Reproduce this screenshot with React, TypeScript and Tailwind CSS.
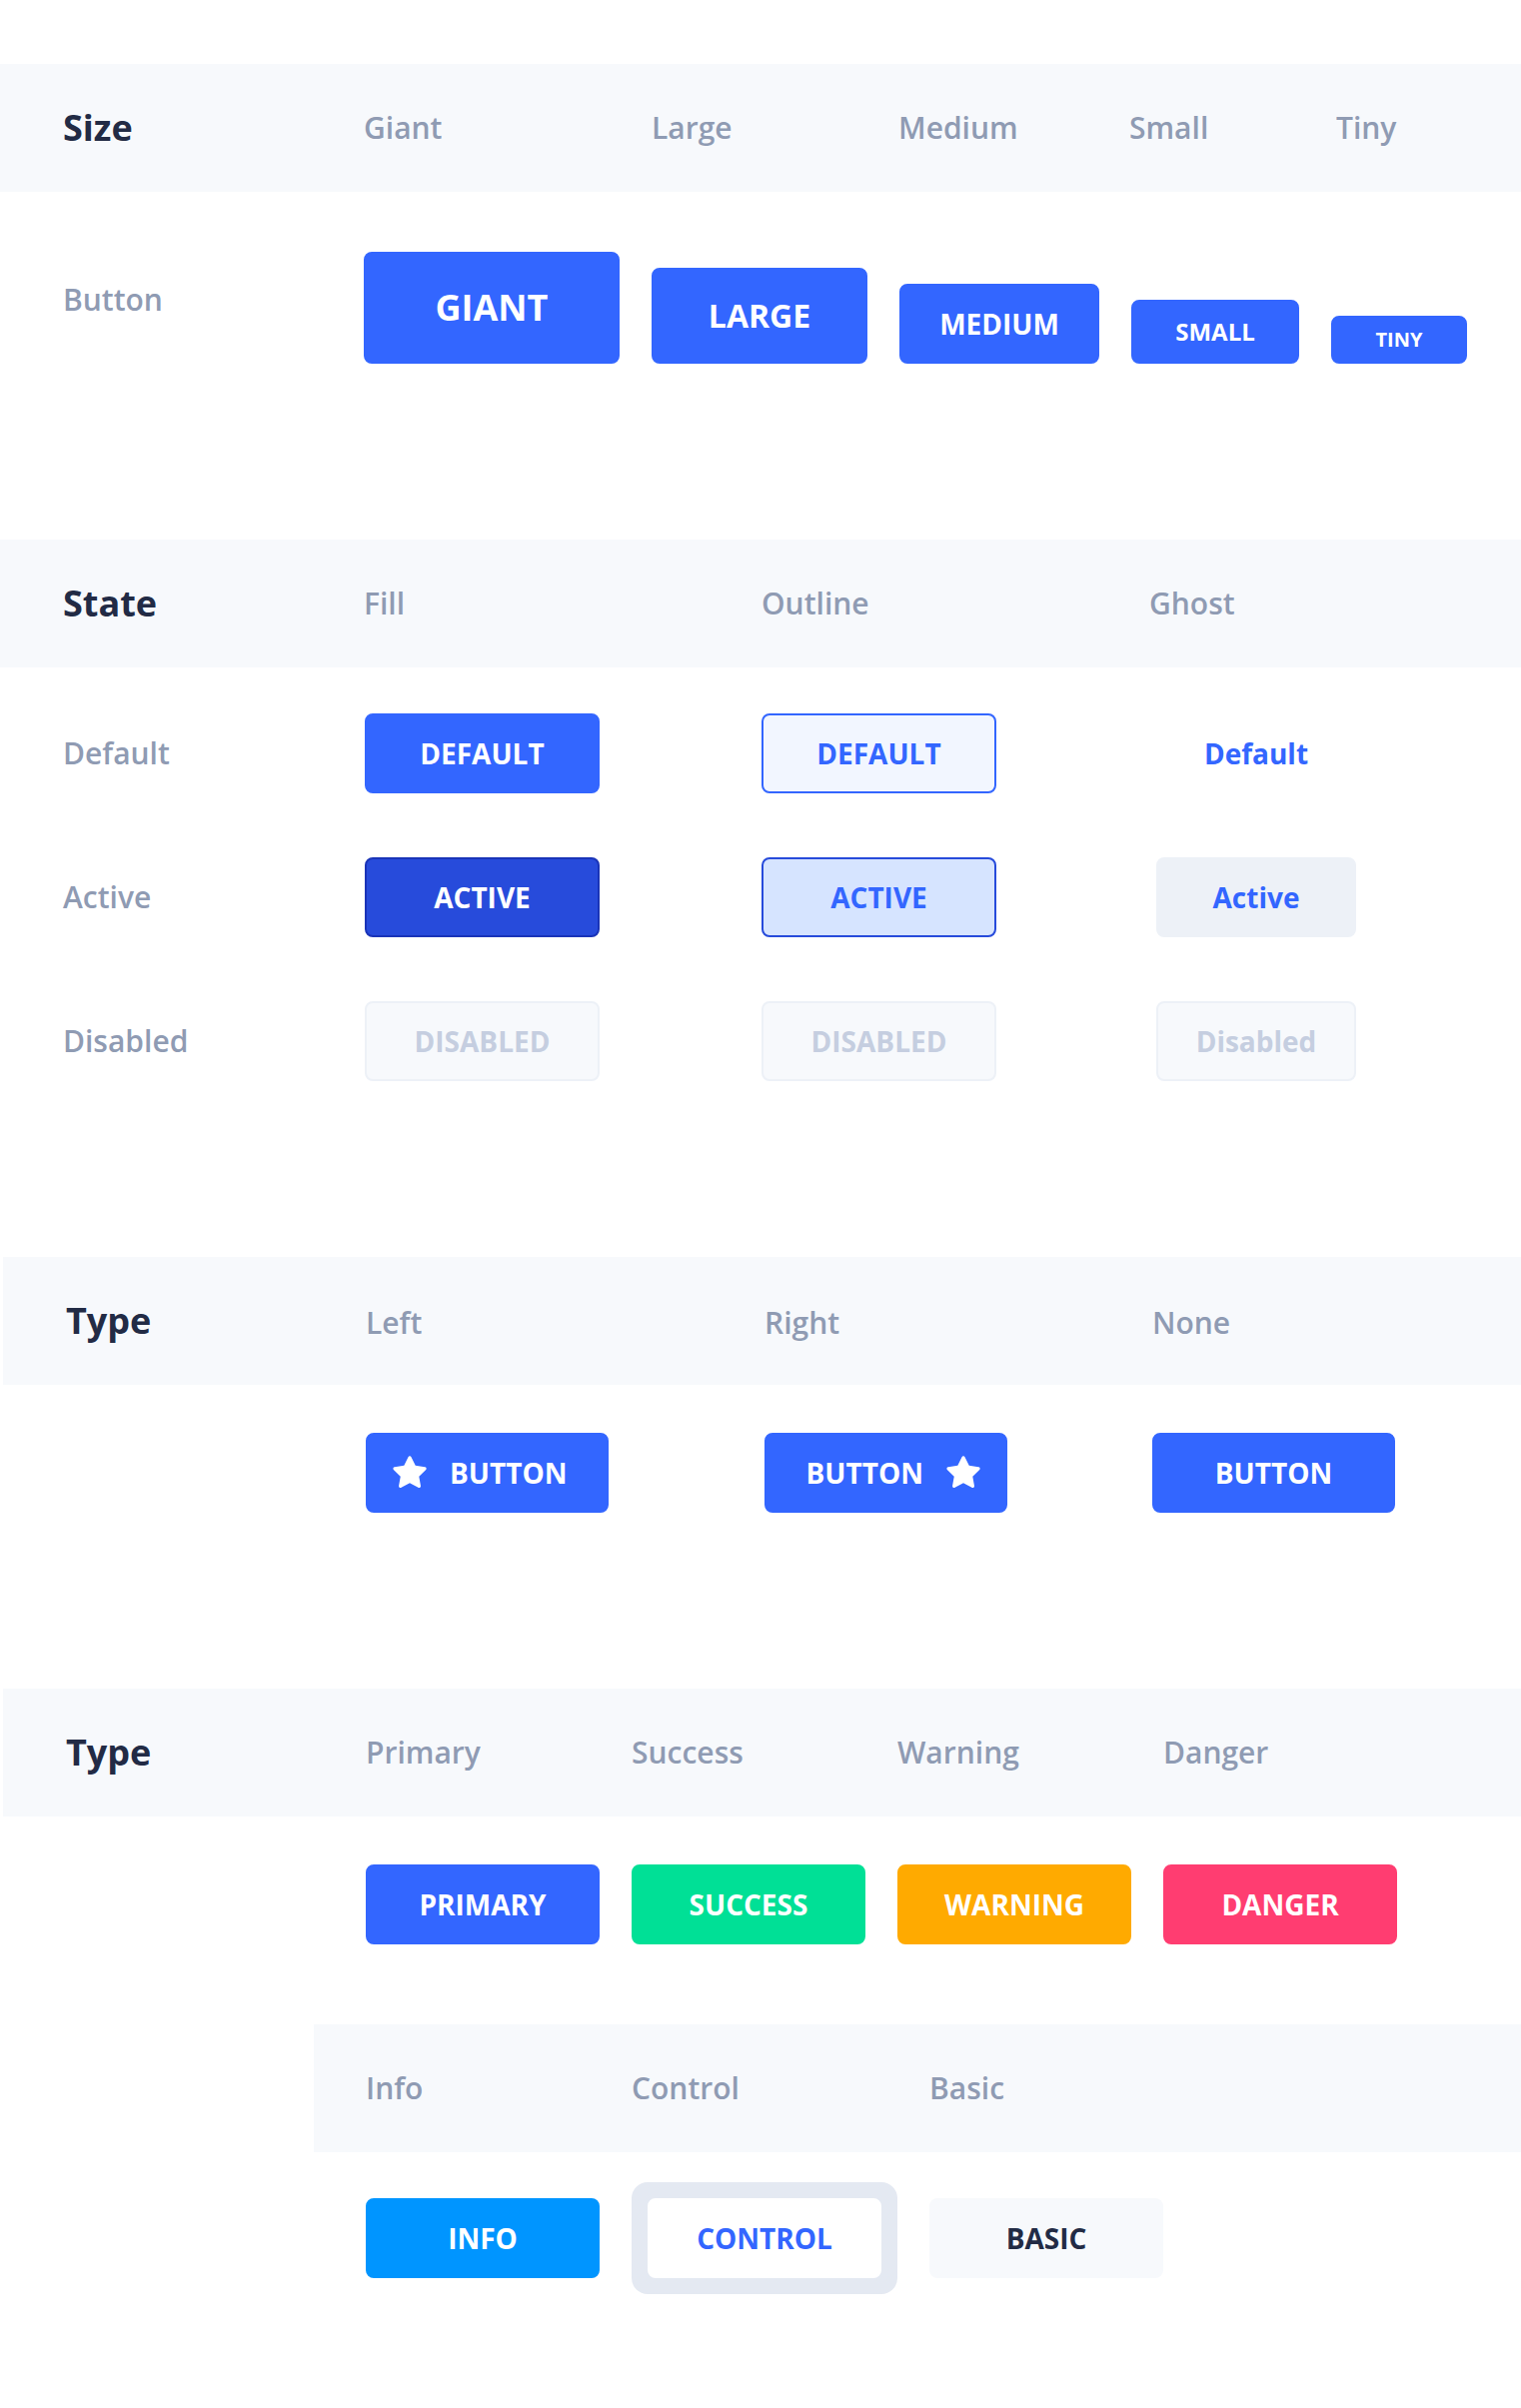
import type { ReactNode } from 'react';

function Star() {
  return (
    <svg viewBox="0 0 24 24" className="size-[40px] shrink-0" fill="currentColor">
      <path d="M17.56 21a1 1 0 0 1-.46-.11L12 18.22l-5.1 2.67a1 1 0 0 1-1.45-1.06l1-5.63-4.12-4a1 1 0 0 1-.25-1 1 1 0 0 1 .81-.68l5.7-.83 2.51-5.13a1 1 0 0 1 1.8 0l2.54 5.12 5.7.83a1 1 0 0 1 .81.68 1 1 0 0 1-.25 1l-4.12 4 1 5.63a1 1 0 0 1-.4 1 1 1 0 0 1-.62.18z" />
    </svg>
  );
}

function Btn({ className, children }: { className: string; children: ReactNode }) {
  return (
    <button
      type="button"
      className={`flex shrink-0 items-center rounded-[8px] border-2 font-bold leading-normal ${className}`}
    >
      {children}
    </button>
  );
}

const band = 'flex h-[128px] items-center bg-[#f7f9fc]';
const title = 'text-[36px] font-bold leading-[48px] text-[#222b45]';
const label = 'text-[30px] font-semibold leading-[40px] text-[#8f9bb3]';

const primary = 'justify-center border-[#3366ff] bg-[#3366ff] text-white';
const disabled = 'justify-center border-[#edf1f7] bg-[#f7f9fc] text-[#c5cee0]';

export default function App() {
  return (
    <div className="min-h-screen w-full bg-white pt-[64px] pb-[114px] font-['Open_Sans',sans-serif]">
      {/* Size */}
      <section>
        <div className={`${band} pl-[63px]`}>
          <div className={`w-[301px] ${title}`}>Size</div>
          <div className={`w-[288px] ${label}`}>Giant</div>
          <div className={`w-[247px] ${label}`}>Large</div>
          <div className={`w-[231px] ${label}`}>Medium</div>
          <div className={`w-[207px] ${label}`}>Small</div>
          <div className={label}>Tiny</div>
        </div>
        <div className="mt-[60px] flex items-center pl-[63px]">
          <div className={`w-[301px] pb-[16px] ${label}`}>Button</div>
          <div className="flex items-end gap-[32px]">
            <Btn className={`h-[112px] w-[256px] text-[36px] ${primary}`}>GIANT</Btn>
            <Btn className={`h-[96px] w-[216px] text-[32px] ${primary}`}>LARGE</Btn>
            <Btn className={`h-[80px] w-[200px] text-[28px] ${primary}`}>MEDIUM</Btn>
            <Btn className={`h-[64px] w-[168px] text-[24px] ${primary}`}>SMALL</Btn>
            <Btn className={`h-[48px] w-[136px] text-[20px] ${primary}`}>TINY</Btn>
          </div>
        </div>
      </section>

      {/* State */}
      <section className="mt-[176px]">
        <div className={`${band} pl-[63px]`}>
          <div className={`w-[301px] ${title}`}>State</div>
          <div className={`w-[398px] ${label}`}>Fill</div>
          <div className={`w-[388px] ${label}`}>Outline</div>
          <div className={label}>Ghost</div>
        </div>
        <div className="mt-[46px] flex flex-col gap-[64px] pl-[63px]">
          <div className="flex items-center">
            <div className={`w-[301px] ${label}`}>Default</div>
            <div className="w-[398px] pl-[1px]">
              <Btn className={`h-[80px] w-[235px] text-[28px] ${primary}`}>DEFAULT</Btn>
            </div>
            <div className="w-[388px]">
              <Btn className="h-[80px] w-[235px] justify-center border-[#3366ff] bg-[#f2f6ff] text-[28px] text-[#3366ff]">
                DEFAULT
              </Btn>
            </div>
            <div className="pl-[7px]">
              <Btn className="h-[80px] w-[200px] justify-center border-transparent bg-transparent text-[28px] text-[#3366ff]">
                Default
              </Btn>
            </div>
          </div>
          <div className="flex items-center">
            <div className={`w-[301px] ${label}`}>Active</div>
            <div className="w-[398px] pl-[1px]">
              <Btn className="h-[80px] w-[235px] justify-center border-[#1a34b8] bg-[#274bdb] text-[28px] text-white">
                ACTIVE
              </Btn>
            </div>
            <div className="w-[388px]">
              <Btn className="h-[80px] w-[235px] justify-center border-[#274bdb] bg-[#d6e4ff] text-[28px] text-[#3366ff]">
                ACTIVE
              </Btn>
            </div>
            <div className="pl-[7px]">
              <Btn className="h-[80px] w-[200px] justify-center border-[#edf1f7] bg-[#edf1f7] text-[28px] text-[#3366ff]">
                Active
              </Btn>
            </div>
          </div>
          <div className="flex items-center">
            <div className={`w-[301px] ${label}`}>Disabled</div>
            <div className="w-[398px] pl-[1px]">
              <Btn className={`h-[80px] w-[235px] text-[28px] ${disabled}`}>DISABLED</Btn>
            </div>
            <div className="w-[388px]">
              <Btn className={`h-[80px] w-[235px] text-[28px] ${disabled}`}>DISABLED</Btn>
            </div>
            <div className="pl-[7px]">
              <Btn className={`h-[80px] w-[200px] text-[28px] ${disabled}`}>Disabled</Btn>
            </div>
          </div>
        </div>
      </section>

      {/* Type: icon position */}
      <section className="mt-[176px] ml-[3px]">
        <div className={`${band} pl-[63px]`}>
          <div className={`w-[300px] ${title}`}>Type</div>
          <div className={`w-[399px] pt-[3px] ${label}`}>Left</div>
          <div className={`w-[388px] pt-[3px] ${label}`}>Right</div>
          <div className={`pt-[3px] ${label}`}>None</div>
        </div>
        <div className="mt-[48px] flex items-center pl-[363px]">
          <div className="w-[399px]">
            <Btn className="h-[80px] w-[243px] justify-start gap-[20px] border-[#3366ff] bg-[#3366ff] pl-[22px] text-[28px] text-white">
              <Star />
              <span>BUTTON</span>
            </Btn>
          </div>
          <div className="w-[388px]">
            <Btn className="h-[80px] w-[243px] justify-end gap-[20px] border-[#3366ff] bg-[#3366ff] pr-[22px] text-[28px] text-white">
              <span>BUTTON</span>
              <Star />
            </Btn>
          </div>
          <Btn className={`h-[80px] w-[243px] text-[28px] ${primary}`}>BUTTON</Btn>
        </div>
      </section>

      {/* Type: status */}
      <section className="mt-[176px] ml-[3px]">
        <div className={`${band} pl-[63px]`}>
          <div className={`w-[300px] ${title}`}>Type</div>
          <div className={`w-[266px] ${label}`}>Primary</div>
          <div className={`w-[266px] ${label}`}>Success</div>
          <div className={`w-[266px] ${label}`}>Warning</div>
          <div className={label}>Danger</div>
        </div>
        <div className="mt-[48px] flex items-center gap-[32px] pl-[363px]">
          <Btn className={`h-[80px] w-[234px] text-[28px] ${primary}`}>PRIMARY</Btn>
          <Btn className="h-[80px] w-[234px] justify-center border-[#00e096] bg-[#00e096] text-[28px] text-white">
            SUCCESS
          </Btn>
          <Btn className="h-[80px] w-[234px] justify-center border-[#ffaa00] bg-[#ffaa00] text-[28px] text-white">
            WARNING
          </Btn>
          <Btn className="h-[80px] w-[234px] justify-center border-[#ff3d71] bg-[#ff3d71] text-[28px] text-white">
            DANGER
          </Btn>
        </div>

        <div className={`${band} mt-[80px] ml-[311px] pl-[52px]`}>
          <div className={`w-[266px] ${label}`}>Info</div>
          <div className={`w-[298px] ${label}`}>Control</div>
          <div className={label}>Basic</div>
        </div>
        <div className="mt-[30px] flex items-center gap-[32px] pl-[363px]">
          <Btn className="h-[80px] w-[234px] justify-center border-[#0095ff] bg-[#0095ff] text-[28px] text-white">
            INFO
          </Btn>
          <div className="rounded-[16px] bg-[#e4e9f2] p-[16px]">
            <Btn className="h-[80px] w-[234px] justify-center border-white bg-white text-[28px] text-[#3366ff]">
              CONTROL
            </Btn>
          </div>
          <Btn className="h-[80px] w-[234px] justify-center border-[#f7f9fc] bg-[#f7f9fc] text-[28px] text-[#222b45]">
            BASIC
          </Btn>
        </div>
      </section>
    </div>
  );
}
